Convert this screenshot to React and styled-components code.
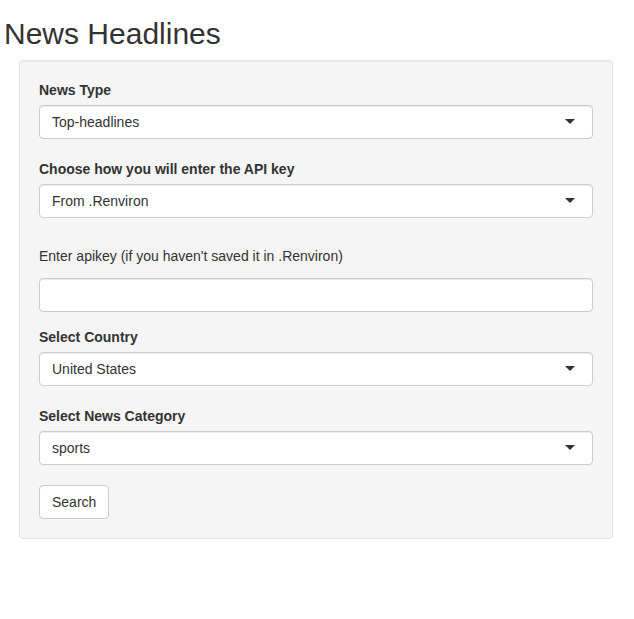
import React from "react";
import styled, { createGlobalStyle } from "styled-components";

const GlobalStyle = createGlobalStyle`
  body {
    margin: 0;
    background: #fff;
    font-family: "Liberation Sans", Arial, Helvetica, sans-serif;
    font-size: 14px;
    line-height: 1.42857;
    color: #333;
  }
  * {
    box-sizing: border-box;
  }
`;

const Page = styled.div`
  width: 634px;
  min-height: 619px;
`;

const Title = styled.h2`
  margin: 17px 0 10px 0;
  padding-left: 4px;
  font-size: 30px;
  font-weight: 500;
  line-height: 1.1;
  color: #333;
`;

const Well = styled.div`
  margin-left: 19px;
  width: 594px;
  padding: 19px;
  background-color: #f5f5f5;
  border: 1px solid #e3e3e3;
  border-radius: 4px;
  box-shadow: inset 0 1px 1px rgba(0, 0, 0, 0.05);
`;

const FormGroup = styled.div`
  margin-bottom: ${(props) => props.gap || 20}px;
`;

const Label = styled.label`
  display: block;
  margin-bottom: 5px;
  font-weight: 700;
  line-height: 20px;
`;

const PlainLabel = styled.label`
  display: block;
  padding-top: 8px;
  margin-bottom: 12px;
  font-weight: 400;
  line-height: 20px;
`;

const SelectBox = styled.div`
  position: relative;
  height: 34px;
  padding: 6px 12px;
  background: #fff;
  border: 1px solid #ccc;
  border-radius: 4px;
  box-shadow: inset 0 1px 1px rgba(0, 0, 0, 0.075);
  line-height: 20px;
  color: #333;
`;

const Caret = styled.span`
  position: absolute;
  top: 50%;
  right: 17px;
  margin-top: -3px;
  width: 0;
  height: 0;
  border-style: solid;
  border-width: 5px 5px 0 5px;
  border-color: #333 transparent transparent transparent;
`;

const TextInput = styled.input`
  display: block;
  width: 100%;
  height: 34px;
  padding: 6px 12px;
  font: inherit;
  color: #555;
  background: #fff;
  border: 1px solid #ccc;
  border-radius: 4px;
  box-shadow: inset 0 1px 1px rgba(0, 0, 0, 0.075);
  outline: none;
`;

const Button = styled.button`
  display: inline-block;
  padding: 6px 12px;
  font-family: inherit;
  font-size: 14px;
  line-height: 20px;
  color: #333;
  background-color: #fff;
  border: 1px solid #ccc;
  border-radius: 4px;
  cursor: pointer;
`;

const Select = ({ value }) => (
  <SelectBox>
    {value}
    <Caret />
  </SelectBox>
);

export default function App() {
  return (
    <Page>
      <GlobalStyle />
      <Title>News Headlines</Title>
      <Well>
        <FormGroup>
          <Label>News Type</Label>
          <Select value="Top-headlines" />
        </FormGroup>
        <FormGroup>
          <Label>Choose how you will enter the API key</Label>
          <Select value="From .Renviron" />
        </FormGroup>
        <FormGroup gap={15}>
          <PlainLabel>Enter apikey (if you haven't saved it in .Renviron)</PlainLabel>
          <TextInput type="text" />
        </FormGroup>
        <FormGroup>
          <Label>Select Country</Label>
          <Select value="United States" />
        </FormGroup>
        <FormGroup>
          <Label>Select News Category</Label>
          <Select value="sports" />
        </FormGroup>
        <Button>Search</Button>
      </Well>
    </Page>
  );
}
